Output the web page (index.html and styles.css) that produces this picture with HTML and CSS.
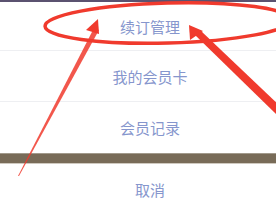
FILE: index.html
```
<!DOCTYPE html>
<html lang="zh-CN">
<head>
    <meta charset="UTF-8">
    <meta name="viewport" content="width=device-width, initial-scale=1.0">
    <title>会员</title>
    <link rel="stylesheet" href="styles.css">
</head>
<body>
    <div class="screen">
        <div class="top-strip"></div>

        <div class="action-sheet">
            <div class="sheet-item">续订管理</div>
            <div class="sheet-item">我的会员卡</div>
            <div class="sheet-item">会员记录</div>
            <div class="sheet-gap"></div>
            <div class="sheet-item">取消</div>
        </div>

        <!-- 标注 -->
        <svg class="annotations" viewBox="0 0 276 200" xmlns="http://www.w3.org/2000/svg">
            <ellipse cx="168" cy="23" rx="123" ry="20" fill="none" stroke="#f03a2d" stroke-width="3.5" transform="rotate(-1.5 168 23)"/>
            <polygon points="18,176 94,28 99,30 19,176" fill="#f03a2d" opacity="0.85"/>
            <polygon points="98,19 86,30 99,34" fill="#f03a2d"/>
            <polygon points="195,35 200,30 280,106 276,114" fill="#f03a2d"/>
            <polygon points="189,25 190,40 203,31" fill="#f03a2d"/>
        </svg>
    </div>
</body>
</html>
```
FILE: styles.css
```
* {
    margin: 0;
    padding: 0;
    box-sizing: border-box;
}

body {
    font-family: "Noto Sans CJK SC", "Noto Sans", sans-serif;
    background-color: #fff;
}

.screen {
    width: 276px;
    height: 200px;
    overflow: hidden;
    position: relative;
}

.top-strip {
    height: 2px;
    background-color: #5b5270;
}

.action-sheet {
    display: flex;
    flex-direction: column;
}

.sheet-item {
    height: 51px;
    flex-shrink: 0;
    display: flex;
    align-items: center;
    justify-content: center;
    padding-left: 24px;
    font-size: 15px;
    color: #8696cd;
    border-bottom: 1px solid #eeeff2;
}

.sheet-item:first-child {
    height: 49px;
}

.sheet-item:nth-child(3) {
    border-bottom: none;
}

.sheet-gap {
    height: 11px;
    flex-shrink: 0;
    background-color: #786b58;
    border-top: 1px solid #a29a8c;
    border-bottom: 1px solid #cfc9bf;
}

.annotations {
    position: absolute;
    left: 0;
    top: 0;
    width: 276px;
    height: 200px;
}
```
